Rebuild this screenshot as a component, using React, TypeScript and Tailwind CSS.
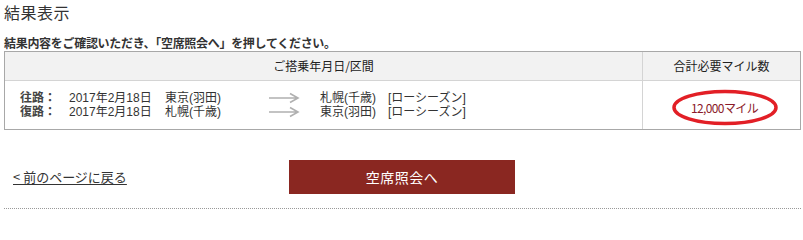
import React from "react";

const font = { fontFamily: '"Noto Sans CJK JP", "Noto Sans", sans-serif' };
const rowFont = { fontFamily: '"Liberation Sans", "Noto Sans CJK JP", sans-serif' };

function Arrow() {
  return (
    <svg width="32" height="12" viewBox="0 0 32 12" className="block">
      <path d="M1 6H30M22 1.5L30 6L22 10.5" fill="none" stroke="#b0b0b0" strokeWidth="1.6" />
    </svg>
  );
}

const legs = [
  { label: "往路：", date: "2017年2月18日", from: "東京(羽田)", to: "札幌(千歳)" },
  { label: "復路：", date: "2017年2月18日", from: "札幌(千歳)", to: "東京(羽田)" },
];

export default function App() {
  return (
    <div className="w-[803px] h-[213px] bg-white text-[#333] pl-[4px] pr-[2px] overflow-hidden" style={font}>
      <h1 className="text-[16px] leading-[20px] pt-[2px] tracking-[0.5px]">結果表示</h1>
      <p className="mt-[14px] text-[12px] leading-[14px] font-bold tracking-[-0.3px]">
        結果内容をご確認いただき、「空席照会へ」を押してください。
      </p>

      <div className="mt-[1px] border border-[#a8a8a8] grid grid-cols-[638px_1fr]">
        <div className="bg-[#f2f2f2] h-[29px] flex items-center justify-center text-[12px] text-[#222] border-r border-b border-[#d4d4d4]">
          ご搭乗年月日/区間
        </div>
        <div className="bg-[#f2f2f2] h-[29px] flex items-center justify-center text-[12px] text-[#222] border-b border-[#d4d4d4]">
          合計必要マイル数
        </div>

        <div className="h-[48px] flex flex-col justify-center border-r border-[#d4d4d4] text-[12px] leading-[14px]" style={rowFont}>
          {legs.map((l) => (
            <div key={l.label} className="flex items-center h-[14px]">
              <span className="w-[49px] pl-[15px] box-content font-bold text-[#444]">{l.label}</span>
              <span className="w-[96px]">{l.date}</span>
              <span className="w-[103px]">{l.from}</span>
              <span className="w-[52px]">
                <Arrow />
              </span>
              <span className="w-[68px]">{l.to}</span>
              <span>[ローシーズン]</span>
            </div>
          ))}
        </div>
        <div className="h-[48px] flex items-center justify-center">
          <div className="relative ml-[6px] mt-[5px] w-[108px] h-[37px] flex items-center justify-center">
            <span className="text-[12px] tracking-[-0.6px] text-[#8b1a2a]">12,000マイル</span>
            <svg className="absolute inset-0" width="108" height="37" viewBox="0 0 108 37">
              <ellipse cx="54" cy="18.5" rx="51" ry="16" fill="none" stroke="#e21f26" strokeWidth="3.5" />
            </svg>
          </div>
        </div>
      </div>

      <div className="mt-[30px] flex items-center">
        <a className="ml-[9px] w-[276px] text-[13px] leading-[16px] underline underline-offset-2 text-[#333]">
          &lt; 前のページに戻る
        </a>
        <button className="w-[226px] h-[34px] bg-[#8a2721] text-white text-[14px] tracking-[0.5px]">
          空席照会へ
        </button>
      </div>

      <div className="mt-[14px] border-t border-dotted border-[#999]" />
    </div>
  );
}
